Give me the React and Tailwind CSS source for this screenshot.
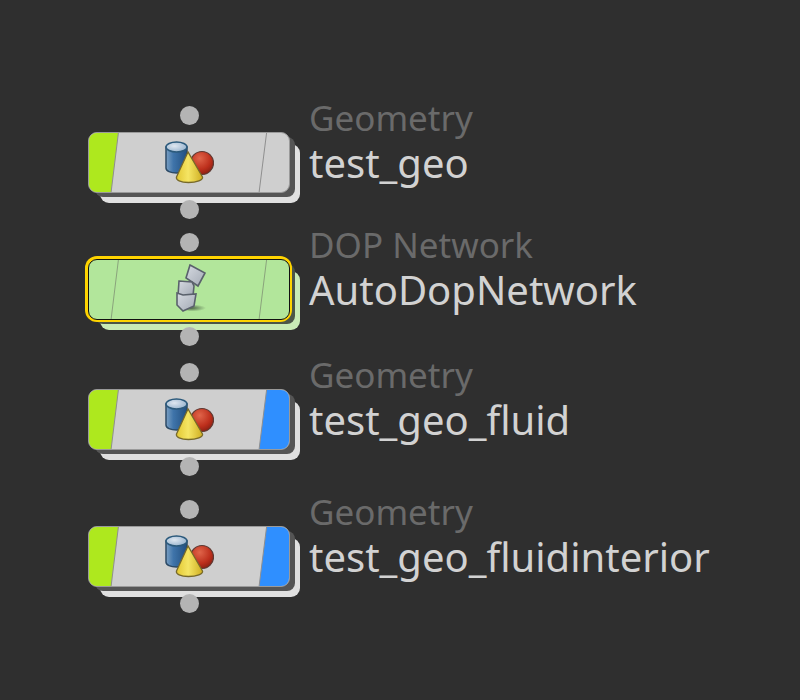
const GeoIcon = () => (
  <svg width="50" height="46" viewBox="0 0 50 46" className="block">
    <defs>
      <linearGradient id="cyl" x1="0" x2="1" y1="0" y2="0">
        <stop offset="0" stopColor="#7ba0c3" />
        <stop offset="0.35" stopColor="#3f74aa" />
        <stop offset="1" stopColor="#224f80" />
      </linearGradient>
      <radialGradient id="cylTop" cx="0.4" cy="0.4" r="0.8">
        <stop offset="0" stopColor="#dfe7f0" />
        <stop offset="1" stopColor="#86a7c6" />
      </radialGradient>
      <radialGradient id="sph" cx="0.4" cy="0.3" r="0.8">
        <stop offset="0" stopColor="#e0654a" />
        <stop offset="0.6" stopColor="#bd2f1c" />
        <stop offset="1" stopColor="#7c1c10" />
      </radialGradient>
      <linearGradient id="cone" x1="0" x2="1" y1="0" y2="0">
        <stop offset="0" stopColor="#e2c732" />
        <stop offset="0.45" stopColor="#f5e564" />
        <stop offset="1" stopColor="#cfae22" />
      </linearGradient>
    </defs>
    <circle cx="38" cy="23" r="11.500" fill="url(#sph)" stroke="#5e3a34" strokeWidth="1.200" />
    <path d="M2 7v21c0 3 4.500 5 10.500 5s10.500-2 10.500-5V7z" fill="url(#cyl)" stroke="#2c4a66" strokeWidth="1.500" />
    <ellipse cx="12.500" cy="7" rx="10.500" ry="5" fill="url(#cylTop)" stroke="#2c5a7c" strokeWidth="1.500" />
    <path d="M24 12L12.500 37c-1 3 4 5.500 12 5.500s15-2.500 14-5.500z" fill="url(#cone)" stroke="#77692a" strokeWidth="1.300" />
  </svg>
);

const DopIcon = () => (
  <svg width="44" height="52" viewBox="0 0 44 52" className="block">
    <defs>
      <linearGradient id="cube" x1="0" x2="1" y1="0" y2="1">
        <stop offset="0" stopColor="#d6dae1" />
        <stop offset="1" stopColor="#a2a9b4" />
      </linearGradient>
      <radialGradient id="shadow" cx="0.3" cy="0.5" r="0.5">
        <stop offset="0" stopColor="#3a4a36" stopOpacity="0.85" />
        <stop offset="1" stopColor="#3a4a36" stopOpacity="0" />
      </radialGradient>
    </defs>
    <ellipse cx="30" cy="44" rx="15" ry="3.500" fill="url(#shadow)" />
    <path d="M23 1l15 8-7 13-12-8z" fill="url(#cube)" stroke="#5a616c" strokeWidth="1.600" />
    <path d="M12 17l13 1 2 4-1 10H11z" fill="url(#cube)" stroke="#5a616c" strokeWidth="1.600" />
    <path d="M10 29l6 2 13-1-2 12-11 5-6-6z" fill="url(#cube)" stroke="#5a616c" strokeWidth="1.600" />
  </svg>
);

const Dot = ({ className }) => (
  <div className={`absolute left-[92px] w-[19px] h-[19px] rounded-full bg-[#b4b4b4] ${className}`} />
);

const Node = ({ top, type, name, kind, blue, selected }) => {
  const isDop = kind === "dop";
  return (
    <div className="absolute left-[88px] flex items-start" style={{ top }}>
      <div className="relative w-[202px] h-[61px] shrink-0">
        <div className={`absolute left-[12px] top-[12px] w-[200px] h-[59px] rounded-[9px] ${isDop ? "bg-[#c9ebb6]" : "bg-[#e0e0e0]"}`} />
        <div className={`absolute left-[7px] top-[5px] w-[200px] h-[60px] rounded-[8px] ${isDop ? "bg-[#4c5648]" : "bg-[#555555]"}`} />
        {selected && (
          <div className="absolute -left-[3px] -top-[3px] w-[207px] h-[66px] rounded-[12px] bg-[#ffd400]" />
        )}
        <div
          className={`relative w-full h-full rounded-[9px] overflow-hidden flex items-center justify-center ${
            isDop ? "bg-[#b2e69b] border-[1.5px] border-[#111111]" : "bg-[#cfcfcf] border border-[#9a9a9a]"
          }`}
        >
          <svg width="202" height="61" viewBox="0 0 202 61" className="absolute -left-px -top-px">
            {!isDop && <path d="M0 0H30.500L23 61H0z" fill="#aee81e" />}
            {blue && <path d="M178.700 0H202V61H171z" fill="#2f8fff" />}
            <path d="M30.500 0L23 61" stroke={isDop ? "#8aa37c" : "#8f8f8f"} strokeWidth="1" fill="none" />
            <path d="M178.700 0L171 61" stroke={isDop ? "#8aa37c" : "#8f8f8f"} strokeWidth="1" fill="none" />
          </svg>
          <div className="relative">{isDop ? <DopIcon /> : <GeoIcon />}</div>
        </div>
        <Dot className="-top-[26px]" />
        <Dot className="top-[68px]" />
      </div>
      <div className="flex flex-col gap-[1px] ml-[19px] -mt-[35px] whitespace-nowrap">
        <div className="text-[35px] leading-[42px] text-[#6a6a6a]">{type}</div>
        <div className="text-[40px] leading-[46px] text-[#d2d2d2]">{name}</div>
      </div>
    </div>
  );
};

export default function App() {
  return (
    <div className="relative w-[800px] h-[700px] overflow-hidden bg-[#2f2f2f] [font-family:'Noto_Sans','Open_Sans',sans-serif]">
      <Node top={132} type="Geometry" name="test_geo" kind="geo" />
      <Node top={259} type="DOP Network" name="AutoDopNetwork" kind="dop" selected />
      <Node top={389} type="Geometry" name="test_geo_fluid" kind="geo" blue />
      <Node top={526} type="Geometry" name="test_geo_fluidinterior" kind="geo" blue />
    </div>
  );
}
